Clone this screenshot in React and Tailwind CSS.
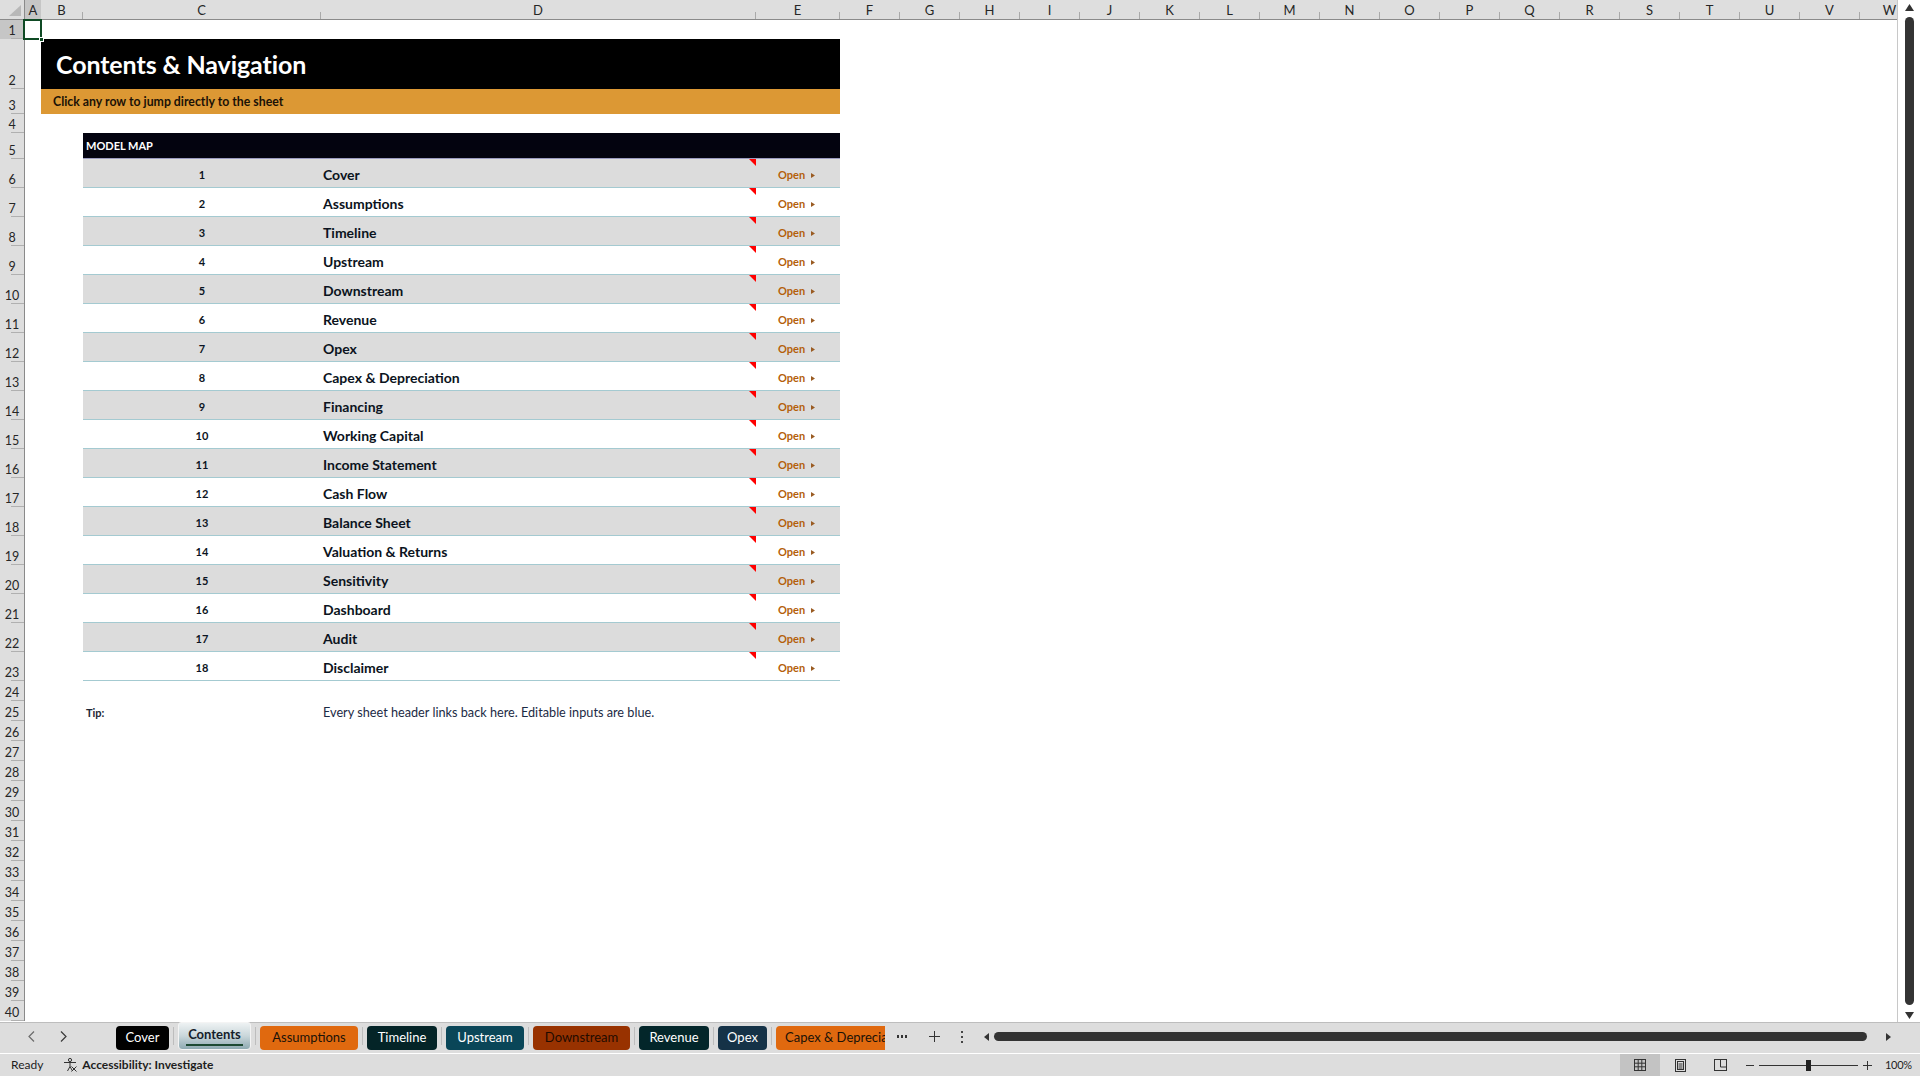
import React from 'react';

const COLS = [
  { id: 'A', w: 'w-[16px]' },
  { id: 'B', w: 'w-[42px]' },
  { id: 'C', w: 'w-[238px]' },
  { id: 'D', w: 'w-[435px]' },
  { id: 'E', w: 'w-[84px]' },
  ...'FGHIJKLMNOPQRSTUVW'.split('').map((id) => ({ id, w: 'w-[60px]' })),
];

const SHEETS = [
  'Cover',
  'Assumptions',
  'Timeline',
  'Upstream',
  'Downstream',
  'Revenue',
  'Opex',
  'Capex & Depreciation',
  'Financing',
  'Working Capital',
  'Income Statement',
  'Cash Flow',
  'Balance Sheet',
  'Valuation & Returns',
  'Sensitivity',
  'Dashboard',
  'Audit',
  'Disclaimer',
];

const TABS = [
  { name: 'Cover', w: 'w-[53px]', cls: 'bg-black text-white' },
  { name: 'Contents', w: 'w-[73px]', active: true },
  { name: 'Assumptions', w: 'w-[98px]', cls: 'bg-[#e0690f] text-[#1a1208]' },
  { name: 'Timeline', w: 'w-[70px]', cls: 'bg-[#042427] text-white' },
  { name: 'Upstream', w: 'w-[78px]', cls: 'bg-[#0a4658] text-white' },
  { name: 'Downstream', w: 'w-[97px]', cls: 'bg-[#983200] text-[#1f0b00]' },
  { name: 'Revenue', w: 'w-[70px]', cls: 'bg-[#03262a] text-white' },
  { name: 'Opex', w: 'w-[49px]', cls: 'bg-[#153247] text-white' },
  { name: 'Capex & Depreciation', w: 'w-[150px]', cls: 'bg-[#e0690f] text-[#1a1208]', clipped: true },
];

// row header cell, label sits near the bottom like Excel
function RowHead({ n, h, active }) {
  return (
    <div
      className={`${h} w-[25px] shrink-0 flex flex-col justify-end border-r border-[#8a8a8a] ${
        active ? 'bg-[#c6c6c6]' : 'bg-[#dedede]'
      }`}
    >
      <div className="text-center text-[12.5px] leading-[15px] text-[#262626]">{n}</div>
      <div className="self-end w-[13px] h-px bg-[#b0b0b0]" />
    </div>
  );
}

function Row({ n, h, active, children }) {
  return (
    <div className={`flex ${h} shrink-0`}>
      <RowHead n={n} h={h} active={active} />
      <div className="flex flex-1 min-w-0">{children}</div>
    </div>
  );
}

function CommentMark() {
  return (
    <svg width="7" height="7" viewBox="0 0 7 7" className="self-start shrink-0">
      <polygon points="0,0 7,0 7,7" fill="#f00" />
    </svg>
  );
}

function MapRow({ idx, name }) {
  const shaded = idx % 2 === 1;
  return (
    <div
      className={`w-[757px] h-full flex border-b border-[#a4cad1] ${shaded ? 'bg-[#dcdcdc]' : 'bg-white'}`}
    >
      <div className="w-[238px] flex items-center justify-center pt-[4px] text-[11px] font-bold text-[#0b1422]">
        {idx}
      </div>
      <div className="w-[435px] flex justify-between">
        <div className="pl-[2px] pt-[2px] flex items-center text-[14px] font-bold text-[#0b1320]">{name}</div>
        <CommentMark />
      </div>
      <div className="w-[84px] flex items-center pl-[22px] pt-[4px] gap-[6px] text-[11px] font-bold text-[#b4600a]">
        <span>Open</span>
        <svg width="4" height="5" viewBox="0 0 4 5">
          <polygon points="0,0 4,2.5 0,5" fill="#9a5b22" />
        </svg>
      </div>
    </div>
  );
}

function ColumnHeader() {
  return (
    <div className="flex h-[20px] shrink-0 border-b border-[#8a8a8a] bg-[#dedede]">
      <div className="w-[25px] shrink-0 border-r border-[#8a8a8a] flex items-end justify-end">
        <svg width="14" height="13" viewBox="0 0 14 13" className="mb-[2px] mr-[2px]">
          <polygon points="1,12 13,12 13,1" fill="#b8b8b8" />
        </svg>
      </div>
      {COLS.map((c) => (
        <div
          key={c.id}
          className={`${c.w} shrink-0 flex items-end ${c.id === 'A' ? 'bg-[#c6c6c6]' : ''}`}
        >
          <div className="flex-1 self-center text-center text-[13px] leading-[16px] text-[#262626]">{c.id}</div>
          {c.id !== 'A' && <div className="w-px h-[7px] bg-[#a9a9a9]" />}
        </div>
      ))}
    </div>
  );
}

function Sheet() {
  const rows = [];
  rows.push(
    <Row key={1} n={1} h="h-[19px]" active>
      <div className="w-[16px] shrink-0 relative">
        <div className="absolute -left-[2px] -top-[1px] w-[19px] h-[21px] border-2 border-[#0f4a24]" />
        <div className="absolute -right-[3px] -bottom-[3px] w-[5px] h-[5px] bg-[#0f4a24] border border-white" />
      </div>
    </Row>
  );
  rows.push(
    <Row key={2} n={2} h="h-[50px]">
      <div className="w-[16px] shrink-0" />
      <div className="w-[799px] bg-black flex items-center pl-[15px] pt-[1px] text-white text-[25px] font-bold tracking-[-0.1px]">
        Contents &amp; Navigation
      </div>
    </Row>
  );
  rows.push(
    <Row key={3} n={3} h="h-[25px]">
      <div className="w-[16px] shrink-0" />
      <div className="w-[799px] bg-[#dc9834] flex items-center pl-[12px] pt-[2px] text-[12.3px] font-bold text-[#1b1206]">
        Click any row to jump directly to the sheet
      </div>
    </Row>
  );
  rows.push(<Row key={4} n={4} h="h-[19px]" />);
  rows.push(
    <Row key={5} n={5} h="h-[26px]">
      <div className="w-[58px] shrink-0" />
      <div className="w-[757px] bg-[#03030f] border-b border-[#9b9bc0] flex items-center pl-[3px] pt-[2px] text-[11px] font-bold text-white">
        MODEL MAP
      </div>
    </Row>
  );
  SHEETS.forEach((name, i) => {
    rows.push(
      <Row key={6 + i} n={6 + i} h="h-[29px]">
        <div className="w-[58px] shrink-0" />
        <MapRow idx={i + 1} name={name} />
      </Row>
    );
  });
  rows.push(<Row key={24} n={24} h="h-[20px]" />);
  rows.push(
    <Row key={25} n={25} h="h-[20px]">
      <div className="w-[58px] shrink-0" />
      <div className="w-[238px] flex items-center pl-[3px] pt-[4px] text-[11px] font-bold text-[#1c2636]">Tip:</div>
      <div className="flex items-center pl-[2px] pt-[4px] text-[12.7px] text-[#1c2a44]">
        Every sheet header links back here. Editable inputs are blue.
      </div>
    </Row>
  );
  for (let n = 26; n <= 40; n++) rows.push(<Row key={n} n={n} h="h-[20px]" />);

  return (
    <div className="w-[1898px] shrink-0 flex flex-col overflow-hidden border-r border-[#c8c8c8]">
      <ColumnHeader />
      {rows}
    </div>
  );
}

function VScroll() {
  return (
    <div className="flex-1 flex flex-col items-center bg-white pt-[4px] pb-[3px]">
      <svg width="9" height="7" viewBox="0 0 9 7">
        <polygon points="4.5,0 9,7 0,7" fill="#333" />
      </svg>
      <div className="mt-[6px] w-[9px] flex-1 rounded-full bg-[#343434]" />
      <svg width="9" height="7" viewBox="0 0 9 7" className="mt-[7px]">
        <polygon points="0,0 9,0 4.5,7" fill="#333" />
      </svg>
    </div>
  );
}

function Tab({ t }) {
  if (t.active) {
    return (
      <div
        className={`${t.w} shrink-0 h-[28px] rounded-t-[3px] rounded-b-[4px] border border-[#f4f4f4] bg-gradient-to-b from-[#eef2f3] via-[#c9d6da] to-[#8eaab2] flex flex-col items-center pt-[3px]`}
      >
        <span className="text-[13px] font-bold leading-[16px] text-[#14202a]">{t.name}</span>
        <div className="mt-[2px] w-[57px] h-[2px] bg-[#1d4a33]" />
      </div>
    );
  }
  return (
    <div
      className={`${t.w} shrink-0 h-[24px] ${
        t.clipped ? 'rounded-l-[4px] justify-start pl-[9px]' : 'rounded-[4px] justify-center'
      } flex items-center text-[13px] whitespace-nowrap ${t.cls}`}
    >
      {t.name}
    </div>
  );
}

function TabBar() {
  return (
    <div className="h-[32px] shrink-0 flex items-end pb-[3px] bg-[#dddddd] border-t border-[#bdbdbd] border-b border-b-white">
      <svg width="7" height="11" viewBox="0 0 7 11" className="self-center ml-[28px]">
        <polyline points="6,0.5 1,5.5 6,10.5" fill="none" stroke="#6b6b6b" strokeWidth="1.2" />
      </svg>
      <svg width="7" height="11" viewBox="0 0 7 11" className="self-center ml-[25px]">
        <polyline points="1,0.5 6,5.5 1,10.5" fill="none" stroke="#3a3a3a" strokeWidth="1.2" />
      </svg>
      <div className="ml-[49px] w-[769px] shrink-0 flex items-end overflow-hidden">
        {TABS.map((t, i) => (
          <React.Fragment key={t.name}>
            {i > 0 && <div className="mx-[4px] w-px h-[18px] self-center bg-[#bdbdbd] shrink-0" />}
            <Tab t={t} />
          </React.Fragment>
        ))}
      </div>
      <div className="self-center ml-[12px] flex gap-[2px]">
        <div className="w-[2px] h-[3px] bg-[#333]" />
        <div className="w-[2px] h-[3px] bg-[#333]" />
        <div className="w-[2px] h-[3px] bg-[#333]" />
      </div>
      <svg width="11" height="11" viewBox="0 0 11 11" className="self-center ml-[22px]">
        <path d="M5.5 0v11M0 5.5h11" stroke="#333" strokeWidth="1" />
      </svg>
      <div className="self-center ml-[21px] flex flex-col gap-[3px]">
        <div className="w-[2px] h-[2px] bg-[#444]" />
        <div className="w-[2px] h-[2px] bg-[#444]" />
        <div className="w-[2px] h-[2px] bg-[#444]" />
      </div>
      <svg width="5" height="8" viewBox="0 0 5 8" className="self-center ml-[21px]">
        <polygon points="5,0 0,4 5,8" fill="#333" />
      </svg>
      <div className="self-center ml-[5px] w-[873px] h-[9px] rounded-full bg-[#333]" />
      <svg width="5" height="8" viewBox="0 0 5 8" className="self-center ml-[19px]">
        <polygon points="0,0 5,4 0,8" fill="#333" />
      </svg>
    </div>
  );
}

function StatusBar() {
  return (
    <div className="h-[22px] shrink-0 flex items-center bg-[#dddddd] text-[12px] text-[#1e1e1e]">
      <span className="pl-[11px]">Ready</span>
      <svg width="14" height="14" viewBox="0 0 14 14" className="ml-[20px]">
        <circle cx="7" cy="2" r="1.6" fill="none" stroke="#333" strokeWidth="1" />
        <path d="M1 4.5h12M7 4.5v4M4.5 13l2.5-4.5 2.5 4.5" fill="none" stroke="#333" strokeWidth="1" />
        <path d="M8.5 8.5l5 5M13.5 8.5l-5 5" stroke="#333" strokeWidth="1" />
      </svg>
      <span className="ml-[5px] font-bold">Accessibility: Investigate</span>
      <div className="ml-auto w-[300px] h-full flex items-center">
        <div className="w-[40px] h-full bg-[#c3c3c3] flex items-center justify-center">
          <svg width="12" height="12" viewBox="0 0 12 12">
            <rect x="0.5" y="0.5" width="11" height="11" fill="none" stroke="#333" />
            <path d="M0 4.2h12M0 7.8h12M4.2 0v12M7.8 0v12" stroke="#333" />
          </svg>
        </div>
        <div className="w-[40px] h-full flex items-center justify-center">
          <svg width="11" height="13" viewBox="0 0 11 13">
            <rect x="0.5" y="0.5" width="10" height="12" fill="none" stroke="#333" />
            <rect x="2.5" y="2.5" width="6" height="8" fill="none" stroke="#333" />
            <path d="M3.5 5h4M3.5 7h4M3.5 9h4" stroke="#333" />
          </svg>
        </div>
        <div className="w-[40px] h-full flex items-center justify-center">
          <svg width="13" height="12" viewBox="0 0 13 12">
            <rect x="0.5" y="0.5" width="12" height="11" fill="none" stroke="#333" />
            <path d="M6.5 0v8M6.5 8h6" stroke="#333" />
          </svg>
        </div>
        <div className="ml-[6px] w-[8px] h-px bg-[#333]" />
        <div className="ml-[5px] w-[99px] h-px bg-[#333] flex items-center justify-center">
          <div className="w-[5px] h-[11px] bg-[#222]" />
        </div>
        <svg width="9" height="9" viewBox="0 0 9 9" className="ml-[5px]">
          <path d="M4.5 0v9M0 4.5h9" stroke="#333" />
        </svg>
        <span className="ml-[13px] text-[11px] tracking-[-0.3px]">100%</span>
      </div>
    </div>
  );
}

export default function App() {
  return (
    <div className="w-[1920px] h-[1076px] flex flex-col overflow-hidden bg-white font-['Lato','Liberation_Sans',sans-serif]">
      <div className="h-[1022px] shrink-0 flex overflow-hidden">
        <Sheet />
        <VScroll />
      </div>
      <TabBar />
      <StatusBar />
    </div>
  );
}
